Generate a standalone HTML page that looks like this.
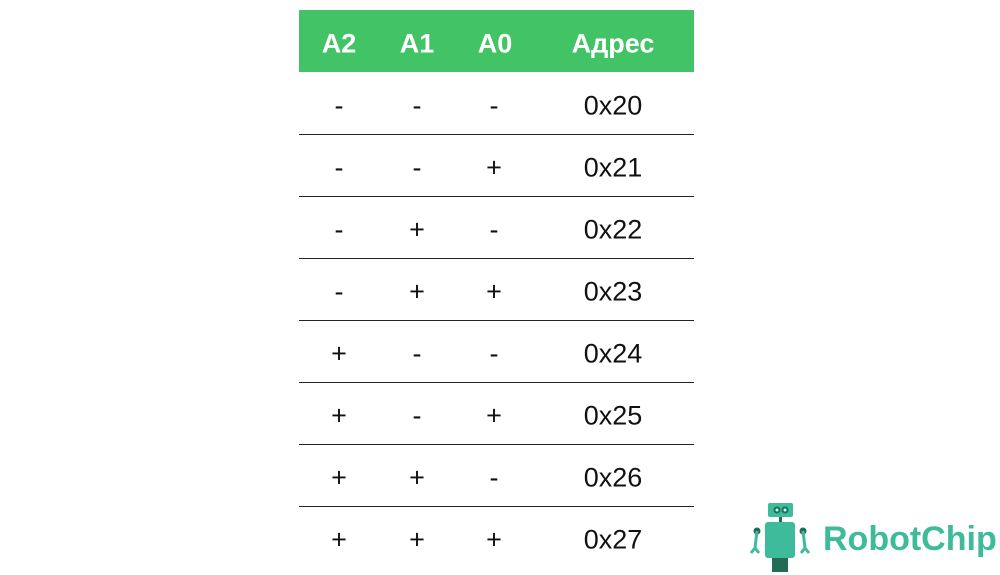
<!DOCTYPE html>
<html><head><meta charset="utf-8"><style>
body{margin:0;width:1000px;height:575px;background:#fff;position:relative;overflow:hidden;font-family:"Liberation Sans","DejaVu Sans",sans-serif}
.hdr{position:absolute;left:299px;top:10px;width:395px;height:62px;background:#42c466}
.c{position:absolute;transform:translate(-50%,-50%);white-space:nowrap}
.h{color:#fff;font-weight:bold;font-size:27px}
.t{color:#111;font-size:27px}
.ln{position:absolute;left:299px;width:395px;height:1px;background:#222}
</style></head><body>
<div class="hdr"></div>
<div class="c h" style="left:339px;top:44px">A2</div>
<div class="c h" style="left:417px;top:44px">A1</div>
<div class="c h" style="left:495px;top:44px">A0</div>
<div class="c h" style="left:613px;top:44px">Адрес</div>
<div id="rows"></div>
<script>
var d=[["-","-","-"],["-","-","+"],["-","+","-"],["-","+","+"],["+","-","-"],["+","-","+"],["+","+","-"],["+","+","+"]];
var h="";
d.forEach(function(r,i){var y=106+i*62;
var xs=[339,417,494];
r.forEach(function(v,j){h+='<div class="c t" style="left:'+xs[j]+'px;top:'+y+'px">'+v+'</div>';});
h+='<div class="c t" style="left:613px;top:'+y+'px">0x2'+i+'</div>';
if(i<7)h+='<div class="ln" style="top:'+(134+i*62)+'px"></div>';});
document.getElementById("rows").innerHTML=h;
</script>
<svg style="position:absolute;left:748px;top:500px" width="252" height="75" viewBox="0 0 252 75">
<rect x="20" y="3" width="25" height="14" rx="2" fill="#3dbb9a"/>
<circle cx="29" cy="10" r="3.5" fill="#1f6f5a"/><circle cx="37" cy="10" r="3.5" fill="#1f6f5a"/>
<circle cx="29" cy="10" r="1.5" fill="#bfe"/><circle cx="37" cy="10" r="1.5" fill="#bfe"/>
<rect x="31" y="17" width="3" height="6" fill="#1f6f5a"/>
<rect x="17" y="22" width="30" height="36" rx="3" fill="#3dbb9a"/>
<rect x="24" y="58" width="16" height="14" fill="#226b56"/>
<circle cx="9" cy="31" r="3.5" fill="#226b56"/><circle cx="55" cy="31" r="3.5" fill="#226b56"/>
<path d="M9 31 L7 48 M7 48 L3 53 M7 48 L11 53 M55 31 L57 48 M57 48 L53 53 M57 48 L61 53" stroke="#3dbb9a" stroke-width="3" fill="none"/>
<text x="75" y="50" font-family="Liberation Sans,sans-serif" font-weight="bold" font-size="34" fill="#3dbb9a">RobotChip</text>
</svg>
</body></html>
